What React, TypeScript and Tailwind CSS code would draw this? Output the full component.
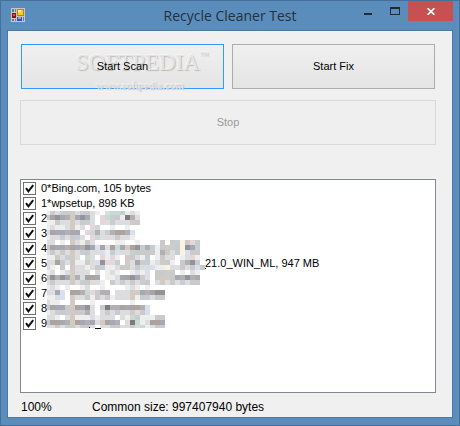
const ITEMS = [
  "0*Bing.com, 105 bytes",
  "1*wpsetup, 898 KB",
  "2*",
  "3*",
  "4*",
  "5*",
  "6*",
  "7*",
  "8*",
  "9*",
];

const SHADES: Record<string, string> = {
  a: "#eeeeef",
  b: "#dddcde",
  c: "#cacaca",
  d: "#b2b0b2",
  e: "#94929a",
  f: "#7f7b7d",
  u: "#c6ced3",
  v: "#a5a9b4",
  w: "#d2cac3",
  x: "#aca29f",
  p: "#e7d5dc",
  g: "#c9d9d4",
  y: "#fbf3e2",
  l: "#d9dfee",
};

// one character per 5px block, "." is left empty
const BLOCKS = [
  "aubucwbucba.bgguaba",
  "cxevdwvevb.pgucafdb",
  "aacbbwbcub.pbubbbwc",
  "abaabwab.pg..a..a..",
  "bxvvdvv.pgdbudxxdl",
  "abbubcub.pgbbbcbba",
  "bb.a.wbacb....aa..a....c.cuycpu",
  "cxvvdxvdevlxbxgvwxeuduacwucyevu",
  "bcbcbwbucbblaulbbuccccadcbuylcc",
  "aacbuwb.gb.papa.wcbau.acbb.abpa",
  "bbxcbcaawblepbu.wbvuuabwca.cdeu",
  "ba.c.wbbabcuaabccbcbblaaybbcbclc",
  "ab.abwbbb.b.aba..alal.ccuc.a.ba",
  "cedevwdbxxv.aabvxevwl.cwwcvdedv",
  "bcbbbwbucbba.cbubcbuc.bwbcbubcc",
  "aba.a..ab..a....aba.a",
  "bbvl.xxdgpcdd.bbbwwvdxee",
  "aabl.wbbcacbcabbbwacubcc",
  "baa..w...a.......a",
  "cxvvcwxveb.cfddxvxxdl",
  "abucuwccdb.bcbubbwbcl",
  "bba.bwaaababbb.baguaaacu",
  "cxxvdwxvdvbwxvd.bfgabxxv",
  "bbcbuwbccb.bbccbbcbgabcu",
];

function AppIcon() {
  return (
    <svg width="14" height="14" viewBox="0 0 14 14" aria-hidden="true" shapeRendering="crispEdges">
      <path fill="#c9c6bd" d="M0 0h14v14H0z" />
      <path fill="#4d85b8" d="M1 1h2v3H1zM4 1h1v3H4zM1 11h2v2H1zM4 11h1v2H4z" />
      <path fill="#8f1210" d="M1 5h4v5H1z" />
      <path fill="#e2493f" d="M2 6h2v2H2z" />
      <path fill="#b98308" d="M6 1h7v7H6z" />
      <path fill="#f7c934" d="M7 2h5v5H7z" />
      <path fill="#fff0a0" d="M7 2h3v2H7z" />
      <path fill="#2c55b5" d="M6 9h5v4H6z" />
      <path fill="#79a7f4" d="M7 9h3v2H7z" />
      <path fill="#4d85b8" d="M12 9h1v4h-1z" />
    </svg>
  );
}

function TitleBar() {
  return (
    <header className="relative flex h-[30px] shrink-0 items-center justify-center">
      <div className="absolute left-[10px] top-[7px]">
        <AppIcon />
      </div>
      <h1 className="font-['Open_Sans',sans-serif] text-[14px] leading-5 text-[#25303c]">
        Recycle Cleaner Test
      </h1>
      <div className="absolute right-[6px] top-0 flex h-5">
        <button aria-label="Minimize" className="flex w-7 items-center justify-center">
          <svg width="8" height="12" viewBox="0 0 8 12" shapeRendering="crispEdges">
            <path fill="#1e2b38" d="M0 8h8v2H0z" />
          </svg>
        </button>
        <button aria-label="Maximize" className="flex w-[26px] items-center justify-center">
          <svg width="10" height="8" viewBox="0 0 10 8" shapeRendering="crispEdges">
            <path fill="#1e2b38" fillRule="evenodd" d="M0 0h10v8H0zM1 2v5h8V2z" />
          </svg>
        </button>
        <button aria-label="Close" className="flex w-[45px] items-center justify-center bg-[#c75050]">
          <svg width="8" height="7" viewBox="0 0 8 7">
            <path stroke="#fff" strokeWidth="1.7" d="M.6.2l6.8 6.6M7.4.2L.6 6.8" />
          </svg>
        </button>
      </div>
    </header>
  );
}

function Watermark() {
  return (
    <span
      aria-hidden="true"
      className="pointer-events-none absolute left-[54px] top-1 flex flex-col items-start font-['Liberation_Serif',serif] text-[#e4e4e4] [text-shadow:1px_1px_1px_#bababa,-1px_-1px_0_#f4f4f4]"
    >
      <span className="flex text-[23px] leading-7">
        SOFTPEDIA<span className="text-[9px] leading-3">™</span>
      </span>
      <span className="pl-5 text-[11px] leading-4">www.softpedia.com</span>
    </span>
  );
}

function CheckRow({ text }: { text: string }) {
  return (
    <li>
      <label className="flex h-[15px] items-center gap-[5px]">
        <span className="relative flex">
          <input
            type="checkbox"
            defaultChecked
            className="peer size-[13px] appearance-none border border-[#707070] bg-white"
          />
          <svg
            className="pointer-events-none absolute left-0 top-0 hidden peer-checked:block"
            width="13"
            height="13"
            viewBox="0 0 13 13"
            aria-hidden="true"
          >
            <path fill="none" stroke="#111" strokeWidth="2" d="M3 6.2l2.4 3.1L10.2 3.2" />
          </svg>
        </span>
        {text}
      </label>
    </li>
  );
}

function Mosaic() {
  return (
    <svg
      className="pointer-events-none absolute left-6 top-[30px]"
      width="162"
      height="119"
      viewBox="0 0 162 119"
      aria-hidden="true"
      shapeRendering="crispEdges"
    >
      <path fill="#fff" d="M2 1h93v16H2zM2 17h88v13H2zM2 30h153v55H2zM2 85h118v33H2z" />
      {BLOCKS.map((line, row) =>
        line.split("").map((shade, col) =>
          shade === "." ? null : (
            <rect
              key={`${row}-${col}`}
              x={col === 0 ? 2 : col * 5}
              y={row === 0 ? 1 : row * 5}
              width={col === 0 ? 3 : 5}
              height={row === 0 ? 4 : row === 23 ? 3 : 5}
              fill={SHADES[shade]}
            />
          ),
        ),
      )}
      <path fill="#111" d="M50 118h6v1h-6zM44 117h1v1h-1zM160 58h1v1h-1z" />
    </svg>
  );
}

export default function App() {
  return (
    <main className="flex min-h-screen flex-col border border-[#466f9b] bg-[#5a8dbc] px-[6px] pb-[7px] font-['Liberation_Sans',sans-serif] text-[11px] text-black">
      <div className="-mx-[6px]">
        <TitleBar />
      </div>
      <div className="-mt-px flex flex-1 flex-col border border-[#4c79a3] bg-[#f0f0f0] pl-3 pr-4 pt-[13px]">
        <div className="grid grid-cols-2 gap-2 px-px">
          <button className="relative h-[45px] border border-[#3399ff] bg-linear-to-b from-[#f0f0f0] to-[#e4e4e4]">
            <Watermark />
            <span className="relative">Start Scan</span>
          </button>
          <button className="h-[45px] border border-[#acacac] bg-linear-to-b from-[#f0f0f0] to-[#e4e4e4]">
            Start Fix
          </button>
        </div>
        <button
          disabled
          className="mt-[11px] h-[45px] border border-[#d9d9d9] bg-[#efefef] text-[#9a9a9a]"
        >
          Stop
        </button>
        <div className="relative mt-[34px] flex-1 border border-[#828790] bg-white">
          <ul className="pl-[2px] pt-px">
            {ITEMS.map((text) => (
              <CheckRow key={text} text={text} />
            ))}
          </ul>
          <Mosaic />
          <span className="absolute left-[184px] top-[76px] leading-[15px]">21.0_WIN_ML, 947 MB</span>
        </div>
        <footer className="flex h-6 items-center pt-1 text-[12px]">
          <span className="w-[72px] pl-px">100%</span>
          <span>Common size: 997407940 bytes</span>
        </footer>
      </div>
    </main>
  );
}
